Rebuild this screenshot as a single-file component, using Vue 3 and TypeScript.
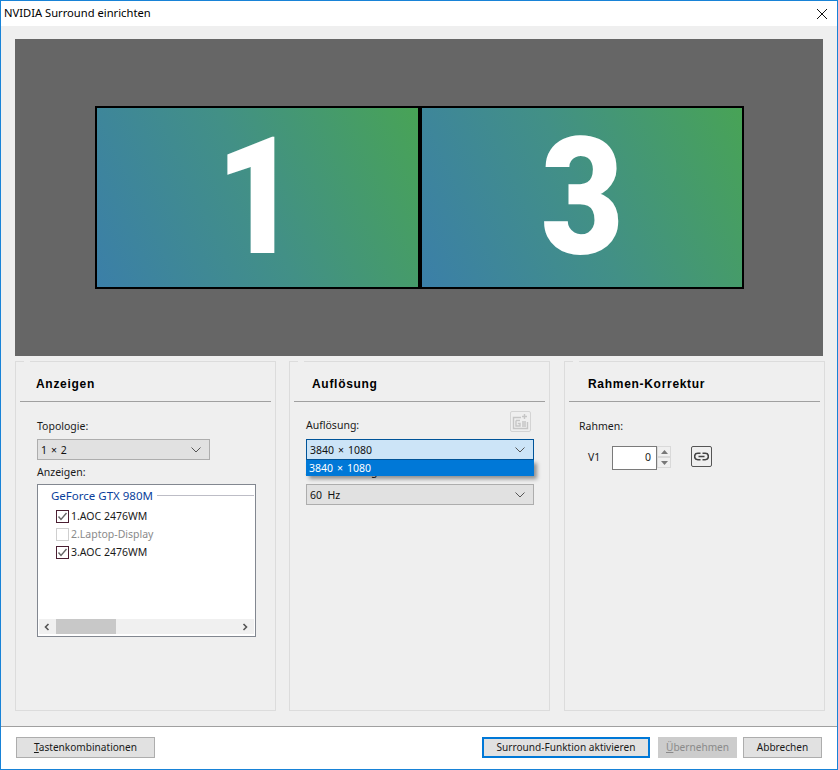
<script setup lang="ts">
const monitors: string[] = ['1', '3']
const displays = [
  { label: '1.AOC 2476WM', checked: true, disabled: false },
  { label: '2.Laptop-Display', checked: false, disabled: true },
  { label: '3.AOC 2476WM', checked: true, disabled: false },
]
</script>

<template>
  <div class="window">
    <header class="titlebar">
      <span class="title">NVIDIA Surround einrichten</span>
      <svg class="close" width="12" height="12" viewBox="0 0 12 12">
        <path d="M1 1 L11 11 M11 1 L1 11" stroke="#111" stroke-width="1" fill="none" />
      </svg>
    </header>

    <main class="content">
      <section class="preview">
        <div v-for="m in monitors" :key="m" class="monitor"><span class="digit">{{ m }}</span></div>
      </section>

      <section class="panels">
        <div class="panel">
          <h2 class="panel-title">Anzeigen</h2>
          <div class="rule"></div>
          <div class="body body-a">
            <div class="label">Topologie:</div>
            <div class="select select-topo">
              <span class="wide">1 × 2</span>
              <svg class="chev" width="10" height="6" viewBox="0 0 10 6"><path d="M0.5 0.5 L5 5 L9.5 0.5" stroke="#555" fill="none" /></svg>
            </div>
            <div class="label label-displays">Anzeigen:</div>
            <div class="listbox">
              <div class="group">
                <span class="group-name">GeForce GTX 980M</span>
                <span class="group-line"></span>
              </div>
              <div v-for="d in displays" :key="d.label" class="row" :class="{ off: d.disabled }">
                <span class="check">
                  <svg v-if="d.checked" width="11" height="11" viewBox="0 0 11 11"><path d="M1.5 5.5 L4 8.5 L9.5 2" stroke="#666" stroke-width="1.4" fill="none" /></svg>
                </span>
                <span>{{ d.label }}</span>
              </div>
              <div class="scrollbar">
                <svg width="8" height="8" viewBox="0 0 8 8"><path d="M5.5 1 L2.5 4 L5.5 7" stroke="#555" stroke-width="1.6" fill="none" /></svg>
                <div class="track"><div class="thumb"></div></div>
                <svg width="8" height="8" viewBox="0 0 8 8"><path d="M2.5 1 L5.5 4 L2.5 7" stroke="#555" stroke-width="1.6" fill="none" /></svg>
              </div>
            </div>
          </div>
        </div>

        <div class="panel panel-mid">
          <h2 class="panel-title">Auflösung</h2>
          <div class="rule"></div>
          <div class="body body-b">
            <div class="label-row">
              <span class="label">Auflösung:</span>
              <span class="custom-btn">
                <svg width="17" height="17" viewBox="0 0 17 17">
                  <path d="M9 4.5 H1.5 V15.5 H15.5 V9 M4 7.5 H8 M4 7.5 V13 H8 V10.5 H5.8 M10 9 H14 M10 11 H14 M10 13 H14 M12.5 1 V6 M10 3.5 H15" stroke="#c6c6c6" stroke-width="1.4" fill="none" />
                </svg>
              </span>
            </div>
            <div class="select-wrap">
              <div class="select select-focus">
                <span class="wide">3840 × 1080</span>
                <svg class="chev" width="10" height="6" viewBox="0 0 10 6"><path d="M0.5 0.5 L5 5 L9.5 0.5" stroke="#555" fill="none" /></svg>
              </div>
              <div class="popup"><span class="wide">3840 × 1080</span></div>
            </div>
            <div class="label label-rate">Aktualisierungsrate:</div>
            <div class="select">
              <span>60&nbsp; Hz</span>
              <svg class="chev" width="10" height="6" viewBox="0 0 10 6"><path d="M0.5 0.5 L5 5 L9.5 0.5" stroke="#555" fill="none" /></svg>
            </div>
          </div>
        </div>

        <div class="panel panel-last">
          <h2 class="panel-title">Rahmen-Korrektur</h2>
          <div class="rule"></div>
          <div class="body body-c">
            <div class="label">Rahmen:</div>
            <div class="bezel">
              <span class="v1">V1</span>
              <div class="spin-input">0</div>
              <div class="spin">
                <span class="spin-btn"><svg width="7" height="4" viewBox="0 0 7 4"><path d="M0 4 L3.5 0 L7 4 Z" fill="#777" /></svg></span>
                <span class="spin-btn"><svg width="7" height="4" viewBox="0 0 7 4"><path d="M0 0 L3.5 4 L7 0 Z" fill="#777" /></svg></span>
              </div>
              <span class="link-btn">
                <svg width="15" height="9" viewBox="0 0 15 9">
                  <path d="M6.5 1.3 H3.8 A3.2 3.2 0 0 0 3.8 7.7 H6.5 M8.5 1.3 H11.2 A3.2 3.2 0 0 1 11.2 7.7 H8.5 M4.5 4.5 H10.5" stroke="#444" stroke-width="1.6" fill="none" />
                </svg>
              </span>
            </div>
          </div>
        </div>
      </section>
    </main>

    <footer class="footer">
      <button class="btn btn-keys"><u>T</u>astenkombinationen</button>
      <div class="spacer"></div>
      <button class="btn btn-primary">Surround-Funktion aktivieren</button>
      <button class="btn btn-disabled"><u>Ü</u>bernehmen</button>
      <button class="btn btn-cancel">Abbrechen</button>
    </footer>
  </div>
</template>

<style>
html, body { margin: 0; background: #fff; }
</style>

<style scoped>
.window {
  width: 838px;
  height: 770px;
  box-sizing: border-box;
  border: 1px solid #1883d7;
  display: flex;
  flex-direction: column;
  font-family: "Noto Sans", "Open Sans", sans-serif;
  font-size: 10.5px;
  color: #1a1a1a;
  background: #fff;
  overflow: hidden;
}
.titlebar {
  height: 25px;
  display: flex;
  align-items: center;
  justify-content: space-between;
  padding: 0 8px 0 3px;
  flex: none;
}
.title { font-size: 11.2px; color: #000; position: relative; top: -1px; }
.close { margin-right: 1px; }
.content {
  flex: none;
  height: 701px;
  box-sizing: border-box;
  background: #efefef;
  border-bottom: 1px solid #a0a0a0;
  padding: 13px 12px 0 14px;
}
.preview {
  width: 808px;
  height: 317px;
  background: #666;
  box-sizing: border-box;
  padding: 67px 0 0 80px;
  display: flex;
  align-items: flex-start;
}
.monitor {
  width: 325px;
  height: 183px;
  box-sizing: border-box;
  border: 2px solid #000;
  background: linear-gradient(65deg, #3b7fa8 0%, #429086 50%, #48a356 100%);
  color: #fff;
  font-family: Roboto, "Liberation Sans", sans-serif;
  font-weight: 900;
  font-size: 163px;
  line-height: 179px;
  text-align: center;
}
.digit { display: inline-block; transform: scaleX(0.88); }
.monitor + .monitor { width: 324px; }
.panels {
  display: flex;
  margin-top: 5px;
  align-items: flex-start;
}
.panel {
  width: 261px;
  height: 350px;
  box-sizing: border-box;
  border: 1px solid #dcdcdc;
  flex: none;
  position: relative;
}
.panel::before {
  content: "";
  position: absolute;
  top: -1px;
  left: 8px;
  width: 6px;
  height: 1px;
  background: #efefef;
}
.panel-mid { margin-left: 13px; }
.panel-last { margin-left: 14px; }
.panel-title {
  margin: 0;
  height: 39px;
  box-sizing: border-box;
  padding: 15px 0 0 20px;
  font-family: "Liberation Sans", sans-serif;
  font-size: 12px;
  letter-spacing: 0.7px;
  line-height: 14px;
  font-weight: 700;
  color: #000;
}
.panel-mid .panel-title { padding-left: 22px; }
.panel-last .panel-title { padding-left: 23px; }
.rule {
  height: 1px;
  margin: 0 4px;
  background: #a0a0a0;
}
.body { position: relative; }
.body-a { padding: 17px 0 0 21px; }
.body-b { padding: 9px 15px 0 16px; }
.body-c { padding: 17px 0 0 14px; }
.label { line-height: 14px; color: #1a1a1a; }
.wide { word-spacing: 1.2px; }
.select {
  height: 21px;
  box-sizing: border-box;
  background: #e1e1e1;
  border: 1px solid #adadad;
  display: flex;
  align-items: center;
  justify-content: space-between;
  padding: 0 8px 0 3px;
  color: #111;
}
.select-topo { width: 173px; margin-top: 6px; }
.label-displays { margin-top: 5px; }
.chev { flex: none; }
.listbox {
  width: 219px;
  height: 153px;
  margin-top: 5px;
  box-sizing: border-box;
  border: 1px solid #828790;
  background: #fff;
  display: flex;
  flex-direction: column;
  position: relative;
}
.group {
  display: flex;
  align-items: center;
  height: 18px;
  padding: 0 1px 0 13px;
  margin: 1px 0 3px;
}
.group-name { color: #0a3f9c; font-size: 11.5px; white-space: nowrap; }
.group-line { flex: 1; height: 1px; background: #bdbdc6; margin-left: 4px; }
.row {
  display: flex;
  align-items: center;
  height: 18px;
  padding-left: 18px;
  color: #1a1a1a;
}
.row.off { color: #8a8a8a; }
.check {
  width: 13px;
  height: 13px;
  box-sizing: border-box;
  border: 1px solid #4b1f32;
  margin-right: 2px;
  display: flex;
  align-items: center;
  justify-content: center;
  background: #fff;
}
.row.off .check { border-color: #cfcfcf; }
.scrollbar {
  margin: auto 1px 2px;
  height: 15px;
  background: #f0f0f0;
  display: flex;
  align-items: center;
  justify-content: space-between;
  padding: 0 5px 0 4px;
}
.track { flex: 1; height: 15px; position: relative; }
.thumb {
  width: 60px;
  height: 15px;
  margin-left: 5px;
  background: #c8c8c8;
}
.label-row {
  display: flex;
  justify-content: space-between;
  align-items: flex-end;
  height: 21px;
}
.custom-btn {
  width: 21px;
  height: 21px;
  box-sizing: border-box;
  border: 1px solid #d4d4d4;
  border-radius: 2px;
  margin-right: 3px;
  display: flex;
  align-items: center;
  justify-content: center;
}
.select-wrap { position: relative; margin-top: 7px; }
.select-focus { background: #cce4f7; border-color: #005499; }
.popup {
  position: absolute;
  top: 21px;
  left: 0;
  right: 0;
  height: 16px;
  box-sizing: border-box;
  padding-left: 3px;
  line-height: 17px;
  background: #0078d7;
  color: #fff;
  box-shadow: 3px 3px 4px rgba(0, 0, 0, 0.4);
  z-index: 2;
}
.label-rate { margin-top: 5px; line-height: 13px; margin-bottom: 6px; }
.bezel {
  display: flex;
  align-items: flex-start;
  margin-top: 13px;
  padding-left: 9px;
}
.v1 { width: 24px; line-height: 22px; }
.spin-input {
  width: 45px;
  height: 24px;
  box-sizing: border-box;
  border: 1px solid #7a7a7a;
  background: #fff;
  text-align: right;
  padding-right: 5px;
  line-height: 21px;
}
.spin {
  width: 14px;
  display: flex;
  flex-direction: column;
}
.spin-btn {
  height: 11px;
  box-sizing: border-box;
  border: 1px solid #d9d9d9;
  display: flex;
  align-items: center;
  justify-content: center;
}
.link-btn {
  width: 21px;
  height: 21px;
  box-sizing: border-box;
  margin-left: 20px;
  border: 1px solid #555;
  border-radius: 2px;
  display: flex;
  align-items: center;
  justify-content: center;
}
.footer {
  flex: 1;
  display: flex;
  align-items: flex-start;
  padding: 10px 15px 0 15px;
}
.spacer { flex: 1; }
.btn {
  height: 21px;
  box-sizing: border-box;
  border: 1px solid #adadad;
  background: #e1e1e1;
  font: inherit;
  font-size: 10.1px;
  color: #1a1a1a;
  padding: 0;
  line-height: 17px;
}
.btn-keys { width: 139px; }
.btn-primary { width: 168px; border: 2px solid #0078d7; }
.btn-disabled { width: 79px; margin-left: 8px; background: #ccc; border-color: #ccc; color: #8a8a8a; }
.btn-cancel { width: 79px; margin-left: 6px; }
</style>
